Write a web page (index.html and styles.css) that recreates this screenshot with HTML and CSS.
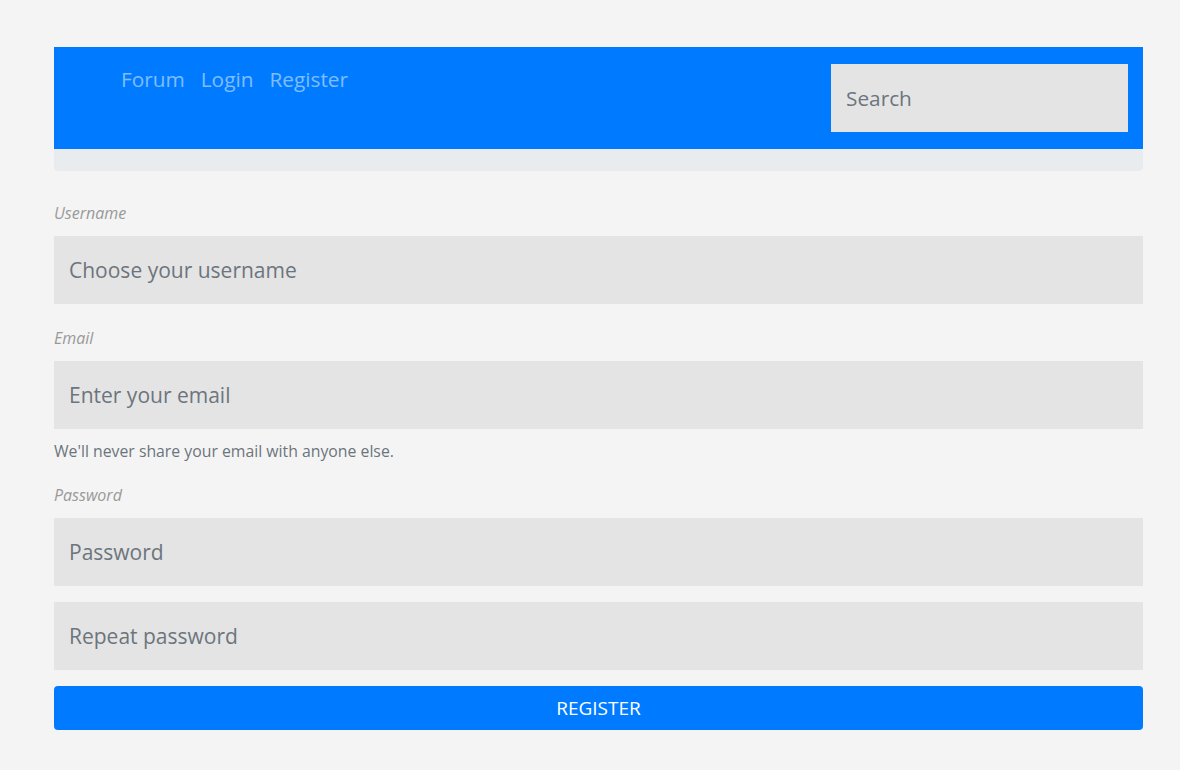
FILE: index.html
```html
<!DOCTYPE html>
<html lang="en">
<head>
<meta charset="utf-8">
<title>Register</title>
<link rel="stylesheet" href="styles.css">
</head>
<body>
<div class="page">
  <header class="header">
    <nav class="nav">
      <div class="links">
        <a href="#" class="link">Forum</a>
        <a href="#" class="link">Login</a>
        <a href="#" class="link">Register</a>
      </div>
      <input class="search" type="text" placeholder="Search">
    </nav>
  </header>
  <form class="form">
    <div class="group">
      <label class="label">Username</label>
      <input class="field" type="text" placeholder="Choose your username">
    </div>
    <div class="group">
      <label class="label">Email</label>
      <input class="field" type="email" placeholder="Enter your email">
      <small class="help">We'll never share your email with anyone else.</small>
    </div>
    <div class="group group-tight">
      <label class="label">Password</label>
      <input class="field" type="password" placeholder="Password">
    </div>
    <div class="group group-tight">
      <input class="field" type="password" placeholder="Repeat password">
    </div>
    <button class="btn" type="button">REGISTER</button>
  </form>
</div>
</body>
</html>
```

FILE: styles.css
```css
* { box-sizing: border-box; }
html, body { margin: 0; padding: 0; }
body {
  background: #f4f4f4;
  font-family: "Open Sans", "Noto Sans", sans-serif;
  color: #212529;
}
.page {
  padding: 47px 37px 0 54px;
}
.header {
  background: #e9ecef;
  border-radius: 0 0 4px 4px;
  padding-bottom: 22px;
}
.nav {
  background: #007bff;
  height: 102px;
  display: flex;
  justify-content: space-between;
  align-items: flex-start;
  padding: 17px 15px 17px 67px;
}
.links {
  display: flex;
  gap: 16px;
}
.link {
  font-size: 20.8px;
  line-height: 30px;
  color: rgba(255, 255, 255, 0.5);
  text-decoration: none;
}
.search {
  width: 297px;
  height: 68px;
  border: 0;
  background: #e4e4e4;
  padding: 0 15px;
  font-family: inherit;
  font-size: 20.8px;
  color: #495057;
  outline: none;
}
.search::placeholder, .field::placeholder { color: #6c757d; opacity: 1; }
.form {
  padding-top: 31px;
  display: flex;
  flex-direction: column;
}
.group {
  display: flex;
  flex-direction: column;
  margin-bottom: 23px;
}
.group-tight { margin-bottom: 16px; }
.label {
  font-size: 16px;
  line-height: 22px;
  font-style: italic;
  color: #999999;
  margin-bottom: 12px;
}
.field {
  width: 100%;
  height: 68px;
  border: 0;
  background: #e4e4e4;
  padding: 0 15px;
  font-family: inherit;
  font-size: 21px;
  color: #495057;
  outline: none;
}
.help {
  font-size: 15.8px;
  line-height: 22px;
  color: #6c757d;
  margin-top: 11px;
  margin-bottom: -1px;
}
.btn {
  height: 44px;
  border: 0;
  border-radius: 4px;
  background: #007bff;
  color: #ffffff;
  font-family: inherit;
  font-size: 19px;
  cursor: pointer;
}
```
